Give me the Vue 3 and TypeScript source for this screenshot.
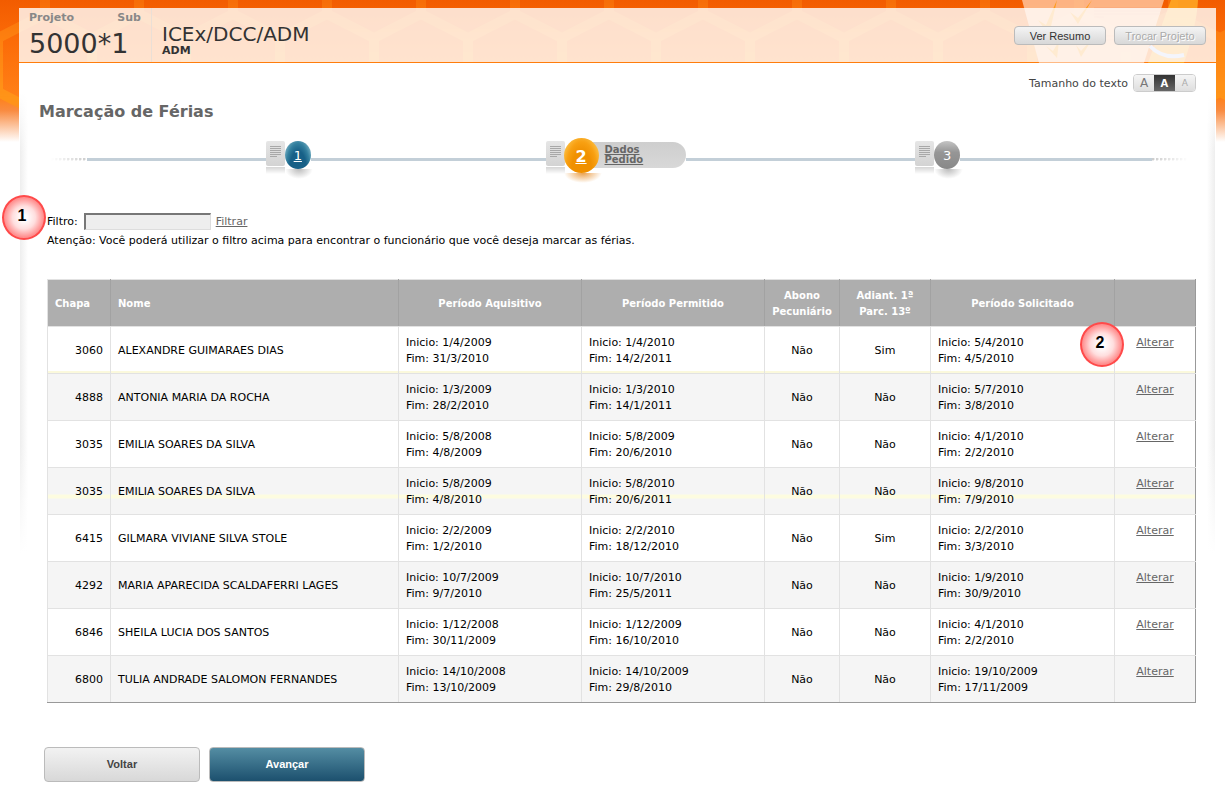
<script setup lang="ts">
import { ref } from 'vue'

interface Period { start: string; end: string }
interface Row {
  id: string
  name: string
  earned: Period
  allowed: Period
  bonus: string
  advance: string
  requested: Period
}

const p = (start: string, end: string): Period => ({ start, end })

const rows: Row[] = [
  { id: '3060', name: 'ALEXANDRE GUIMARAES DIAS', earned: p('1/4/2009', '31/3/2010'), allowed: p('1/4/2010', '14/2/2011'), bonus: 'Não', advance: 'Sim', requested: p('5/4/2010', '4/5/2010') },
  { id: '4888', name: 'ANTONIA MARIA DA ROCHA', earned: p('1/3/2009', '28/2/2010'), allowed: p('1/3/2010', '14/1/2011'), bonus: 'Não', advance: 'Não', requested: p('5/7/2010', '3/8/2010') },
  { id: '3035', name: 'EMILIA SOARES DA SILVA', earned: p('5/8/2008', '4/8/2009'), allowed: p('5/8/2009', '20/6/2010'), bonus: 'Não', advance: 'Não', requested: p('4/1/2010', '2/2/2010') },
  { id: '3035', name: 'EMILIA SOARES DA SILVA', earned: p('5/8/2009', '4/8/2010'), allowed: p('5/8/2010', '20/6/2011'), bonus: 'Não', advance: 'Não', requested: p('9/8/2010', '7/9/2010') },
  { id: '6415', name: 'GILMARA VIVIANE SILVA STOLE', earned: p('2/2/2009', '1/2/2010'), allowed: p('2/2/2010', '18/12/2010'), bonus: 'Não', advance: 'Sim', requested: p('2/2/2010', '3/3/2010') },
  { id: '4292', name: 'MARIA APARECIDA SCALDAFERRI LAGES', earned: p('10/7/2009', '9/7/2010'), allowed: p('10/7/2010', '25/5/2011'), bonus: 'Não', advance: 'Não', requested: p('1/9/2010', '30/9/2010') },
  { id: '6846', name: 'SHEILA LUCIA DOS SANTOS', earned: p('1/12/2008', '30/11/2009'), allowed: p('1/12/2009', '16/10/2010'), bonus: 'Não', advance: 'Não', requested: p('4/1/2010', '2/2/2010') },
  { id: '6800', name: 'TULIA ANDRADE SALOMON FERNANDES', earned: p('14/10/2008', '13/10/2009'), allowed: p('14/10/2009', '29/8/2010'), bonus: 'Não', advance: 'Não', requested: p('19/10/2009', '17/11/2009') },
]

const filter = ref('')
const textSize = ref('medium')
</script>

<template>
  <div class="page">
    <svg class="backdrop" aria-hidden="true">
      <defs>
        <linearGradient id="sky" x1="0" y1="0" x2="0" y2="1">
          <stop offset="0" stop-color="#f25c00" />
          <stop offset="0.3" stop-color="#fc6c08" />
          <stop offset="0.68" stop-color="#ff8017" />
          <stop offset="0.78" stop-color="#f98c42" />
          <stop offset="1" stop-color="#ffffff" />
        </linearGradient>
        <linearGradient id="fade" x1="0" y1="0" x2="0" y2="1">
          <stop offset="0" stop-color="#ffffff" stop-opacity="0.3" />
          <stop offset="0.5" stop-color="#ffffff" stop-opacity="0.7" />
          <stop offset="0.7" stop-color="#ffffff" />
          <stop offset="0.9" stop-color="#ffffff" stop-opacity="0" />
        </linearGradient>
        <mask id="fadeMask"><rect width="100%" height="142" fill="url(#fade)" /></mask>
        <pattern id="hex" width="94" height="154" patternUnits="userSpaceOnUse" x="-2">
          <path d="M47 0V14L0 38V92L47 116V154M47 14L94 38V92L47 116" fill="none" stroke="#ff9418" stroke-width="10" />
        </pattern>
      </defs>
      <rect width="100%" height="142" fill="url(#sky)" />
      <rect width="100%" height="142" fill="url(#hex)" mask="url(#fadeMask)" />
    </svg>

    <div class="sheet">
      <header class="banner">
        <svg class="art" viewBox="0 0 200 63" aria-hidden="true">
          <path d="M4 0H146L126 63H21Z" fill="#ffc9a4" opacity=".8" />
          <path d="M153 0H180Q179 24 166 63H130Z" fill="#ffae28" opacity=".8" />
          <path d="M20 20L28 25L39 0L31 35ZM52 12L60 18L74 0L60 24ZM28 46L35 51L41 41L39 58ZM58 45L63 51L75 38L63 57Z" fill="#ff9c1a" />
          <path d="M132 46Q145 60 166 55" fill="none" stroke="#c5ccef" stroke-width="4" />
          <path d="M76 8H142M76 11H142M76 14H142M76 17H86M76 36H96M76 40H96" stroke="#f9a476" stroke-width="1" />
        </svg>
        <div class="veil">
          <div class="project">
            <div class="labels"><span>Projeto</span><span>Sub</span></div>
            <div class="code">5000*1</div>
          </div>
          <div class="unit">
            <div class="unit-name">ICEx/DCC/ADM</div>
            <div class="unit-short">ADM</div>
          </div>
          <div class="actions">
            <button type="button">Ver Resumo</button>
            <button type="button" disabled>Trocar Projeto</button>
          </div>
        </div>
      </header>

      <main>
        <div class="text-size">
          <span>Tamanho do texto</span>
          <div class="sizes" role="group" aria-label="Tamanho do texto">
            <button type="button" class="large" :class="{ on: textSize === 'large' }" @click="textSize = 'large'">A</button>
            <button type="button" class="medium" :class="{ on: textSize === 'medium' }" @click="textSize = 'medium'">A</button>
            <button type="button" class="small" :class="{ on: textSize === 'small' }" @click="textSize = 'small'">A</button>
          </div>
        </div>
        <h1>Marcação de Férias</h1>

        <nav class="steps" aria-label="Etapas">
          <i class="dots"></i>
          <i class="rail lead"></i>
          <span class="step">
            <svg class="doc" viewBox="0 0 19 36" aria-hidden="true"><use href="#doc" /></svg>
            <a href="#" class="ball blue">1</a>
          </span>
          <i class="rail first"></i>
          <span class="step active">
            <svg class="doc" viewBox="0 0 19 36" aria-hidden="true"><use href="#doc" /></svg>
            <a href="#" class="ball orange">2</a>
            <a href="#" class="pill">Dados<br>Pedido</a>
          </span>
          <i class="rail second"></i>
          <span class="step">
            <svg class="doc" viewBox="0 0 19 36" aria-hidden="true"><use href="#doc" /></svg>
            <span class="ball gray">3</span>
          </span>
          <i class="rail last"></i>
          <i class="dots end"></i>
        </nav>
        <svg class="symbols" aria-hidden="true">
          <defs>
            <linearGradient id="paper" x1="0" y1="0" x2="0" y2="1">
              <stop offset="0" stop-color="#e6e6e6" /><stop offset="1" stop-color="#d3d3d3" />
            </linearGradient>
            <linearGradient id="mirror" x1="0" y1="0" x2="0" y2="1">
              <stop offset="0" stop-color="#d5d5d5" /><stop offset="1" stop-color="#ffffff" />
            </linearGradient>
            <symbol id="doc" viewBox="0 0 19 36">
              <path d="M0 26H19V33H0Z" fill="url(#mirror)" />
              <rect width="19" height="25" rx="2" fill="url(#paper)" />
              <path d="M4 5.500H15M4 7.500H15M4 9.500H15M4 11.500H15M4 13.500H15M4 15.500H11" stroke="#a8a8a8" />
            </symbol>
          </defs>
        </svg>

        <form class="filter" @submit.prevent>
          <div class="filter-line">
            <span class="marker one">1</span>
            <label for="filtro">Filtro:</label>
            <input id="filtro" v-model="filter" type="text">
            <a href="#">Filtrar</a>
          </div>
          <p>Atenção: Você poderá utilizar o filtro acima para encontrar o funcionário que você deseja marcar as férias.</p>
        </form>

        <table>
          <colgroup>
            <col class="c-id"><col><col class="c-period"><col class="c-period">
            <col class="c-bonus"><col class="c-advance"><col class="c-request"><col class="c-action">
          </colgroup>
          <thead>
            <tr>
              <th class="left">Chapa</th>
              <th class="left">Nome</th>
              <th>Período Aquisitivo</th>
              <th>Período Permitido</th>
              <th>Abono<br>Pecuniário</th>
              <th>Adiant. 1ª<br>Parc. 13º</th>
              <th>Período Solicitado</th>
              <th></th>
            </tr>
          </thead>
          <tbody>
            <tr v-for="(row, i) in rows" :key="i" :class="{ under: i === 0, through: i === 3 }">
              <td class="right">{{ row.id }}</td>
              <td>{{ row.name }}</td>
              <td>Inicio: {{ row.earned.start }}<br>Fim: {{ row.earned.end }}</td>
              <td>Inicio: {{ row.allowed.start }}<br>Fim: {{ row.allowed.end }}</td>
              <td class="center">{{ row.bonus }}</td>
              <td class="center">{{ row.advance }}</td>
              <td>Inicio: {{ row.requested.start }}<br>Fim: {{ row.requested.end }}</td>
              <td class="action"><span v-if="i === 0" class="marker two">2</span><a href="#">Alterar</a></td>
            </tr>
          </tbody>
        </table>

        <div class="buttons">
          <button type="button" class="back">Voltar</button>
          <button type="button" class="next">Avançar</button>
        </div>
      </main>
    </div>
  </div>
</template>

<style>
body {
  margin: 0;
  background: #fff;
}
</style>

<style scoped>
* {
  box-sizing: border-box;
}
.page {
  position: relative;
  padding: 8px 9px 0 19px;
  font-family: Verdana, "DejaVu Sans", sans-serif;
  font-size: 11px;
  color: #000;
}
.backdrop {
  position: absolute;
  top: 0;
  left: 0;
  width: 100%;
  height: 142px;
}
.sheet {
  position: relative;
}
.banner {
  position: relative;
  border-bottom: 1px solid #ff7d0c;
}
.art {
  position: absolute;
  top: -8px;
  right: -2px;
  width: 200px;
  height: 63px;
}
.veil {
  position: relative;
  display: flex;
  height: 54px;
  background: rgba(255, 255, 255, 0.8);
}
.project {
  width: 133px;
  padding: 3px 10px 0;
  border-right: 1px solid #eadfd6;
}
.labels {
  display: flex;
  justify-content: space-between;
  line-height: 14px;
  font-weight: bold;
  color: #888;
}
.code {
  font-size: 27px;
  line-height: 38px;
  color: #333;
}
.unit {
  padding: 15px 0 0 10px;
  color: #333;
}
.unit-name {
  font-size: 20px;
  line-height: 22px;
}
.unit-short {
  line-height: 12px;
  font-weight: bold;
}
.actions {
  display: flex;
  gap: 8px;
  margin-left: auto;
  padding: 18px 10px 0 0;
}
.actions button {
  width: 92px;
  height: 19px;
  padding: 0;
  border: 1px solid #bbb;
  border-radius: 4px;
  background: linear-gradient(#f4f4f4, #d8d8d8);
  font: 11px "Liberation Sans", Arial, sans-serif;
  color: #333;
}
.actions button:disabled {
  color: #aaa;
  text-shadow: 1px 1px #fff;
}
main {
  padding: 11px 20px 10px;
  background:
    linear-gradient(#fff 30px, rgba(255, 255, 255, 0) 90px, rgba(255, 255, 255, 0) 380px, #fff 490px),
    linear-gradient(90deg, #fff 1px, #eee 1px, #fff 9px, #fff calc(100% - 9px), #eee calc(100% - 1px), #fff calc(100% - 1px));
}
.text-size {
  display: flex;
  justify-content: flex-end;
  align-items: center;
  gap: 5px;
  height: 18px;
  color: #444;
}
.sizes {
  display: flex;
  width: 63px;
  height: 18px;
  border: 1px solid #ccc;
  border-radius: 4px;
  overflow: hidden;
}
.sizes button {
  flex: 1;
  padding: 0;
  border: 0;
  background: linear-gradient(#f5f5f5, #dedede);
  font: 10px "DejaVu Sans", sans-serif;
  color: #777;
}
.sizes .large {
  font-size: 12px;
}
.sizes .small {
  font-size: 9px;
  color: #aaa;
}
.sizes .on {
  background: linear-gradient(#333, #666);
  font-weight: bold;
  color: #fff;
}
h1 {
  margin: 9px 0 0;
  font-size: 16px;
  line-height: 22px;
  color: #666;
}
.steps {
  display: flex;
  align-items: center;
  height: 56px;
  margin: 8px 8px 0 12px;
}
.rail {
  height: 3px;
  background: #c3cfd8;
}
.lead {
  flex: 179;
}
.first {
  flex: 235;
}
.second {
  flex: 230;
}
.last {
  flex: 192;
}
.dots {
  width: 36px;
  height: 3px;
  background: radial-gradient(circle at 1px 1px, #ccc 1px, transparent 2px) 0 0 / 4px 3px;
  mask-image: linear-gradient(90deg, transparent, #000);
}
.dots.end {
  mask-image: linear-gradient(270deg, transparent, #000);
}
.symbols {
  position: absolute;
  width: 0;
  height: 0;
}
.step {
  display: flex;
  align-items: center;
}
.doc {
  width: 19px;
  height: 36px;
}
.ball {
  position: relative;
  z-index: 1;
  display: grid;
  place-items: center;
  width: 26px;
  height: 28px;
  margin: 0 0 9px;
  padding-top: 2px;
  border-radius: 50%;
  font-size: 13px;
  color: #fff;
}
.ball::after {
  content: "";
  position: absolute;
  top: 100%;
  left: 0;
  width: 110%;
  height: 10px;
  background: radial-gradient(ellipse at 50% 0, #bbb, transparent 70%);
}
.blue {
  background: radial-gradient(ellipse at 50% 100%, #176087 45%, #33809f 65%, #a9d2dd);
}
.gray {
  background: linear-gradient(#c4c4c4, #969696 40%, #888);
}
.orange {
  width: 35px;
  height: 35px;
  margin: 0 -2px 8px -1px;
  background: radial-gradient(ellipse at 50% 90%, #f09000 40%, #f8a012 62%, #ffda70);
  font-size: 16px;
  font-weight: bold;
}
.orange::after {
  background: radial-gradient(ellipse at 50% 0, #eaa04c, transparent 70%);
}
.pill {
  width: 105px;
  height: 26px;
  margin: 0 0 9px -16px;
  padding: 3px 0 0 24px;
  border-radius: 0 13px 13px 0;
  background: linear-gradient(#cecece, #d8d8d8);
  font-size: 10px;
  font-weight: bold;
  line-height: 10px;
  color: #666;
}
.filter {
  margin: 25px 0 0 8px;
}
.filter-line {
  position: relative;
  display: flex;
  align-items: center;
  height: 19px;
}
.filter input {
  width: 127px;
  height: 17px;
  margin: 0 5px 0 6px;
  border: 1px solid #ddd;
  border-width: 2px 1px 1px 2px;
  border-color: #777 #ddd #ddd #777;
  background: #eee;
}
a {
  color: #666;
}
.filter p {
  margin: 2px 0 0;
  line-height: 16px;
}
.marker {
  position: absolute;
  z-index: 2;
  display: grid;
  place-items: center;
  width: 44px;
  height: 45px;
  padding: 0 4px 4px 0;
  border: 2px solid #ff4a4a;
  border-radius: 50%;
  background: radial-gradient(circle, #fff 10%, #ffdede 40%, #ff9090 68%);
  font: bold 16px "Liberation Sans", Arial, sans-serif;
  color: #000;
}
.marker.one {
  top: -17px;
  left: -45px;
}
.marker.two {
  top: -5px;
  left: -35px;
}
table {
  width: calc(100% - 8px);
  margin: 30px 0 0 8px;
  border-collapse: collapse;
  table-layout: fixed;
}
.c-id { width: 63px; }
.c-period { width: 183px; }
.c-bonus { width: 75px; }
.c-advance { width: 91px; }
.c-request { width: 184px; }
.c-action { width: 81px; }
th,
td {
  height: 47px;
  padding: 8px 7px 6px;
  border: 1px solid #e2e2e2;
  line-height: 16px;
  text-align: left;
}
th {
  padding: 8px 0 6px;
  background: #aeaeae;
  border-right-color: #a2a2a2;
  border-left-color: #a2a2a2;
  font-size: 10px;
  text-align: center;
  color: #fff;
}
th:first-child {
  border-left-color: #e2e2e2;
}
th:last-child,
td:last-child {
  border-right-color: #999;
}
tbody tr:last-child td {
  border-bottom-color: #999;
}
th.left {
  padding: 8px 7px 6px;
  text-align: left;
}
tbody tr:nth-child(even) {
  background: #f5f5f5;
}
.under td {
  box-shadow: inset 0 -2px #fbf9dc;
}
.through td {
  background: linear-gradient(transparent 26px, #fdfce0 26px, #fdfce0 30px, transparent 30px);
}
.right {
  text-align: right;
}
.center {
  text-align: center;
}
.action {
  position: relative;
  text-align: center;
  vertical-align: top;
}
.buttons {
  display: flex;
  gap: 9px;
  margin: 44px 0 0 5px;
}
.buttons button {
  width: 156px;
  height: 35px;
  padding-bottom: 2px;
  border: 1px solid #bbb;
  border-radius: 4px;
  background: linear-gradient(#f2f2f2, #d8d8d8);
  font: bold 11px "Liberation Sans", Arial, sans-serif;
  color: #444;
}
.buttons .next {
  background: linear-gradient(#548da3, #1c506e);
  color: #fff;
}
</style>
